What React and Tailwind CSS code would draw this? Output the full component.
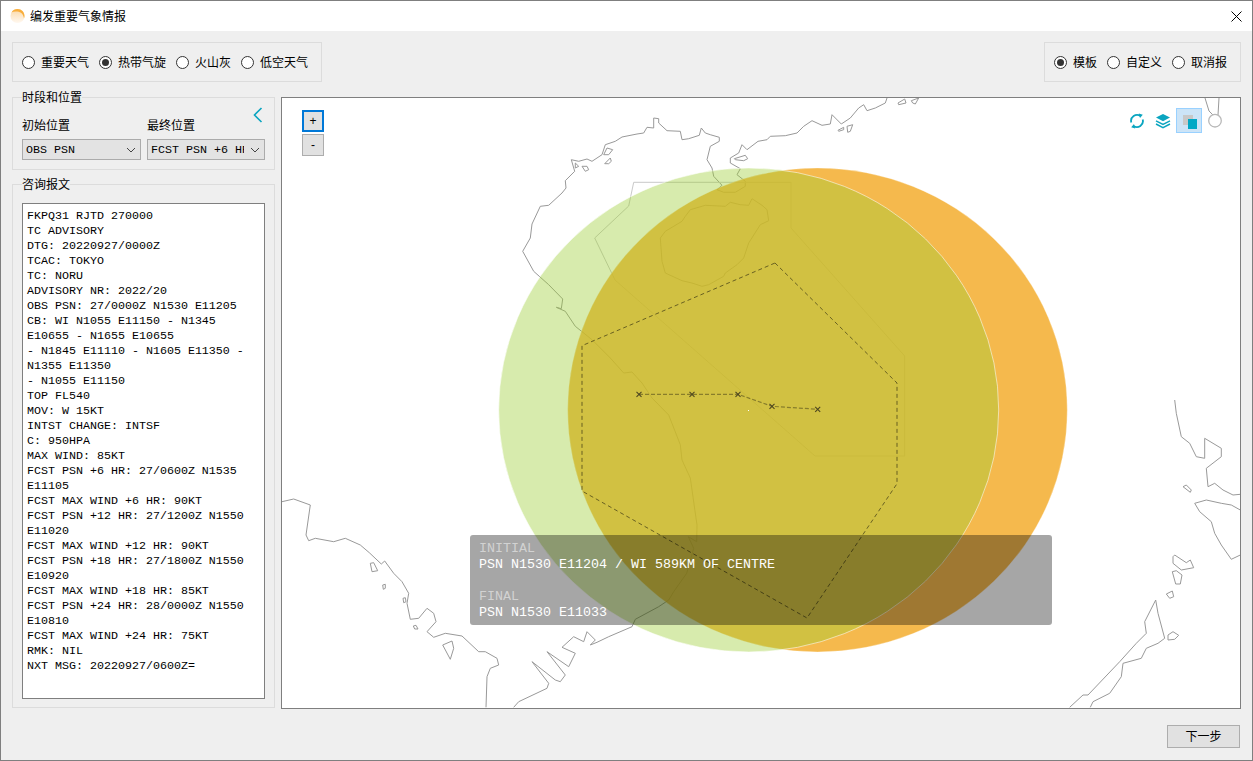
const LEFT_TYPES = [
  { label: '重要天气' },
  { label: '热带气旋', checked: true },
  { label: '火山灰' },
  { label: '低空天气' },
]
const RIGHT_TYPES = [{ label: '模板', checked: true }, { label: '自定义' }, { label: '取消报' }]

const ADVISORY = `FKPQ31 RJTD 270000
TC ADVISORY
DTG: 20220927/0000Z
TCAC: TOKYO
TC: NORU
ADVISORY NR: 2022/20
OBS PSN: 27/0000Z N1530 E11205
CB: WI N1055 E11150 - N1345
E10655 - N1655 E10655
- N1845 E11110 - N1605 E11350 -
N1355 E11350
- N1055 E11150
TOP FL540
MOV: W 15KT
INTST CHANGE: INTSF
C: 950HPA
MAX WIND: 85KT
FCST PSN +6 HR: 27/0600Z N1535
E11105
FCST MAX WIND +6 HR: 90KT
FCST PSN +12 HR: 27/1200Z N1550
E11020
FCST MAX WIND +12 HR: 90KT
FCST PSN +18 HR: 27/1800Z N1550
E10920
FCST MAX WIND +18 HR: 85KT
FCST PSN +24 HR: 28/0000Z N1550
E10810
FCST MAX WIND +24 HR: 75KT
RMK: NIL
NXT MSG: 20220927/0600Z=`

// coordinates below were read off 3x crops, so scale them back to map space
const pts = (ox, oy, list) => {
  const out = []
  for (let i = 0; i < list.length; i += 2) out.push(`${(ox + list[i] / 3).toFixed(1)},${(oy + list[i + 1] / 3).toFixed(1)}`)
  return out.join(' ')
}

const COAST_LINES = [
  // north coast, east part
  pts(400, 0, [615, 0, 610, 15, 580, 30, 555, 38, 545, 20, 530, 30, 505, 60, 478, 78, 450, 50, 445, 78, 420, 82, 390, 68, 365, 85, 345, 105, 310, 113, 265, 115, 255, 125, 228, 130, 195, 155, 180, 140, 170, 165, 145, 180, 145, 195, 175, 212, 165, 230, 190, 250, 190, 265, 160, 283, 125, 283, 105, 275, 120, 262, 95, 235, 90, 210, 75, 185, 85, 145, 112, 130, 112, 118, 85, 110, 70, 105, 58, 90, 52, 112, 20, 122, 0, 125]),
  // north coast, west part, then down the vietnam side
  pts(0, 0, [1200, 125, 1195, 100, 1155, 98, 1130, 75, 1130, 62, 1115, 60, 1115, 90, 1095, 88, 1085, 105, 1065, 108, 1020, 117, 1000, 130, 970, 140, 960, 170, 930, 190, 915, 183, 890, 190, 868, 185, 878, 220, 850, 248, 852, 270, 840, 285, 800, 322, 775, 325, 750, 378, 745, 420, 722, 460, 755, 520, 800, 560, 842, 603, 838, 632, 823, 628, 850, 640, 880, 685, 930, 725, 985, 780, 1025, 825, 1050, 822, 1080, 855, 1110, 900, 1160, 951, 1195, 1040, 1200, 1086, 1225, 1140, 1245, 1281, 1244, 1331, 1219, 1316, 1235, 1351, 1214, 1426, 1175, 1481, 1160, 1506, 1130, 1526, 1060, 1564, 1050, 1586, 980, 1616, 945, 1633, 925, 1641, 940, 1626, 915, 1601, 905, 1631, 875, 1616, 840, 1648, 880, 1666, 860, 1706, 795, 1661, 850, 1731, 835, 1751, 820, 1746, 750, 1691, 800, 1756, 795, 1771, 710, 1811, 695, 1828]),
  // gulf of thailand side
  pts(0, 402, [612, 622, 615, 530, 625, 505, 650, 495, 645, 475, 610, 455, 590, 455, 540, 408, 490, 400, 455, 412, 435, 395, 462, 365, 455, 340, 435, 325, 410, 355, 385, 358, 375, 310, 380, 280, 360, 245, 335, 220, 308, 183, 298, 192, 262, 158, 235, 135, 190, 115, 155, 125, 100, 115, 80, 122, 72, 105, 85, 15, 35, -3, 0, 5]),
  // philippines
  pts(571, 302, [965, 0, 970, 40, 985, 110, 1010, 130, 1030, 170, 1055, 175, 1055, 115, 1105, 145, 1105, 170, 1060, 205, 1065, 260, 1085, 250, 1110, 270, 1140, 285, 1162, 283]),
  pts(571, 302, [1162, 330, 1135, 315, 1105, 310, 1060, 300, 1025, 310, 1040, 335, 1075, 365, 1085, 400, 1105, 435, 1135, 478, 1162, 465]),
  pts(571, 402, [650, 622, 690, 585, 705, 585, 800, 485, 850, 430, 880, 400, 875, 365, 908, 300, 915, 340, 935, 415, 915, 430, 880, 445, 865, 475, 810, 490, 805, 530, 770, 580, 720, 605, 712, 622]),
  // top right corner
  '923,0 927,13 931,17',
  '937,0 936,17',
]

const ISLANDS = [
  pts(0, 0, [880, 195, 890, 205, 880, 210]),
  pts(0, 0, [900, 205, 915, 205, 920, 215, 910, 220]),
  pts(0, 0, [965, 170, 975, 150, 992, 155, 980, 170]),
  pts(0, 0, [968, 197, 985, 180, 988, 190, 980, 197]),
  pts(400, 0, [157, 182, 190, 172, 197, 182, 185, 188, 160, 185]),
  pts(400, 0, [468, 97, 485, 88, 485, 95, 470, 100]),
  pts(400, 0, [495, 85, 512, 80, 505, 100, 497, 103]),
  pts(400, 0, [648, 15, 668, 3, 672, 15, 650, 20]),
  pts(400, 0, [688, 8, 710, 0, 700, 18, 692, 15]),
  // hainan
  pts(400, 0, [10, 355, 25, 335, 70, 322, 130, 325, 145, 313, 175, 320, 200, 322, 210, 302, 240, 322, 255, 335, 260, 368, 235, 380, 200, 435, 185, 480, 165, 500, 130, 525, 125, 535, 80, 560, 60, 565, 30, 555, 0, 548, -50, 525, -60, 490, -65, 420, -50, 400, 0, 370]),
  pts(0, 402, [265, 190, 275, 188, 287, 212, 270, 215]),
  pts(0, 402, [302, 255, 310, 253, 310, 265, 304, 268]),
  pts(0, 402, [363, 295, 370, 293, 372, 305, 365, 308]),
  pts(0, 402, [394, 378, 402, 376, 408, 387, 398, 387]),
  pts(0, 402, [482, 435, 510, 423, 515, 445, 505, 478]),
  pts(571, 302, [990, 260, 1000, 255, 1015, 270, 1012, 277]),
  pts(571, 302, [960, 470, 965, 465, 1000, 488, 1012, 480, 1022, 503, 985, 510, 960, 490]),
  pts(571, 302, [958, 515, 970, 512, 987, 525, 982, 552, 968, 552]),
  pts(571, 302, [940, 582, 958, 573, 962, 590, 950, 595]),
  pts(571, 302, [945, 705, 960, 695, 977, 706, 965, 718, 945, 720]),
]

const CYCLONE_AREA = '493,165 615,285 615,385.7 525,520 300,393 300,247.7'
const TRACK = [
  [357, 296.3],
  [410, 296.3],
  [456, 296.3],
  [490, 308.3],
  [535.7, 311.3],
]

function Radio({ label, checked }) {
  return (
    <label className="flex items-center gap-[6px]">
      <span className="flex h-[13px] w-[13px] items-center justify-center rounded-full border border-[#333333] bg-white">
        {checked && <span className="h-[7px] w-[7px] rounded-full bg-[#333333]" />}
      </span>
      <span className="relative top-[1px] text-[12px] leading-[16px] text-black">{label}</span>
    </label>
  )
}

function Select({ value, width }) {
  return (
    <div className={`flex h-[21px] items-center border border-[#ababab] bg-[#e3e3e3] ${width}`}>
      <span className="min-w-0 flex-1 overflow-hidden pt-[1px] pl-[3px] font-['Liberation_Mono',monospace] text-[11.67px] leading-[19px] whitespace-pre text-black">
        {value}
      </span>
      <svg width="10" height="6" viewBox="0 0 10 6" className="mr-[4px] ml-[6px] shrink-0">
        <path d="M1 1l4 4 4-4" fill="none" stroke="#444" strokeWidth="1" />
      </svg>
    </div>
  )
}

function GroupLegend({ children }) {
  return (
    <span className="absolute top-[-8px] left-[9px] bg-[#efefef] text-[12px] leading-[16px] text-black">{children}</span>
  )
}

function Logo() {
  return (
    <svg width="16" height="16" viewBox="0 0 16 16">
      <defs>
        <linearGradient id="sunFade" x1="0" y1="0" x2="0" y2="1">
          <stop offset="0" stopColor="#fbd9a8" />
          <stop offset="1" stopColor="#fff8f0" />
        </linearGradient>
      </defs>
      <circle cx="8.500" cy="8" r="7" fill="url(#sunFade)" />
      <path d="M2.500 4.500C4 1.800 6 1 8.500 1c4 0 7 3 7 7 0 1-.2 1.800-.5 2.500C14.500 6.500 12 4 8.500 3.600 6 3.300 4 3.500 2.500 4.500z" fill="#f8ae3c" />
    </svg>
  )
}

function RefreshIcon() {
  return (
    <svg width="16" height="16" viewBox="0 0 16 16">
      <g fill="none" stroke="#0aa5c0" strokeWidth="1.800">
        <path d="M2.300 9.500A6 6 0 0 1 11.500 3" />
        <path d="M13.700 6.500A6 6 0 0 1 4.500 13" />
      </g>
      <path d="M9.800 0.500l4 1.200-2.800 3.300zM6.200 15.500l-4-1.200 2.800-3.300z" fill="#0aa5c0" />
    </svg>
  )
}

function LayersIcon() {
  return (
    <svg width="16" height="16" viewBox="0 0 16 16">
      <path d="M8 1l7 3.600-7 3.600-7-3.600z" fill="#0aa5c0" />
      <path d="M1 7.800l7 3.600 7-3.600M1 11l7 3.600 7-3.600" fill="none" stroke="#0aa5c0" strokeWidth="1.500" />
    </svg>
  )
}

function MapView() {
  return (
    <div className="relative min-w-0 flex-1 overflow-hidden border border-[#7f7f7f] bg-white">
      <svg width="958" height="610" viewBox="0 0 958 610" className="absolute top-0 left-0">
        <g fill="none" stroke="#999999" strokeWidth="1" strokeLinejoin="round">
          {COAST_LINES.map((p, i) => (
            <polyline key={i} points={p} />
          ))}
          {ISLANDS.map((p, i) => (
            <polygon key={i} points={p} />
          ))}
          <circle cx="933" cy="22.700" r="6.300" stroke="#b8b8b8" strokeWidth="1.300" />
        </g>
        {/* FIR boundary */}
        <polygon
          points="351.700,84.300 346.700,108 312.700,140 333,182 533,358 622.700,358 622.700,258 509,130 509,84.300"
          fill="none"
          stroke="#c9c9c9"
          strokeWidth="1"
        />
        <ellipse cx="535.500" cy="312" rx="249.800" ry="242" fill="#f2a820" fillOpacity="0.8" stroke="#fff" strokeOpacity="0.3" />
        <ellipse cx="466.700" cy="312" rx="250" ry="242" fill="#9acd32" fillOpacity="0.4" stroke="#fff" strokeOpacity="0.55" />
        <polygon points={CYCLONE_AREA} fill="none" stroke="#000" strokeOpacity="0.5" strokeWidth="1" strokeDasharray="4 3" />
        <polyline
          points={TRACK.map((p) => p.join(',')).join(' ')}
          fill="none"
          stroke="#000"
          strokeOpacity="0.35"
          strokeWidth="1.200"
          strokeDasharray="4 2"
        />
        {TRACK.map(([x, y]) => (
          <path key={x} d={`M${x - 2.500} ${y - 2.500}l5 5m0-5l-5 5`} stroke="#4d4620" strokeWidth="1.100" />
        ))}
        <rect x="466" y="312" width="1" height="1" fill="#fff" />
      </svg>

      {/* zoom buttons */}
      <div className="absolute top-[12px] left-[20px] flex flex-col gap-[2px]">
        <button className="flex h-[22px] w-[22px] items-center justify-center border-2 border-[#0078d7] bg-[#e1e1e1] text-[12px] text-black">
          +
        </button>
        <button className="flex h-[22px] w-[22px] items-center justify-center border border-[#adadad] bg-[#e1e1e1] text-[12px] text-black">
          -
        </button>
      </div>

      {/* map tools */}
      <div className="absolute top-[10px] left-[847px] flex h-[25px] items-center">
        <RefreshIcon />
        <span className="ml-[10px] flex">
          <LayersIcon />
        </span>
        <div className="relative ml-[5px] h-[25px] w-[26px] border border-[#99d1ff] bg-[#cce4f7]">
          <span className="absolute top-[6px] left-[6px] h-[10px] w-[10px] bg-[#c8c8c8]" />
          <span className="absolute top-[10px] left-[11px] h-[10px] w-[9px] bg-[#00a8c6]" />
        </div>
      </div>

      {/* position summary */}
      <div className="absolute top-[437px] left-[188px] h-[90px] w-[582px] rounded-[3px] bg-black/35 pt-[6px] pl-[9px] font-['Liberation_Mono',monospace] text-[13.33px] leading-[16px] whitespace-pre">
        <div className="text-[#d2d2d2]">INITIAL</div>
        <div className="text-white">PSN N1530 E11204 / WI 589KM OF CENTRE</div>
        <div className="h-[16px]" />
        <div className="text-[#d2d2d2]">FINAL</div>
        <div className="text-white">PSN N1530 E11033</div>
      </div>
    </div>
  )
}

export default function App() {
  return (
    <div className="flex h-[761px] w-[1253px] flex-col overflow-hidden border border-[#7f7f7f] bg-[#efefef] font-['Liberation_Sans','Noto_Sans_CJK_SC',sans-serif]">
      {/* title bar */}
      <div className="flex h-[30px] shrink-0 items-center bg-white pr-[10px] pl-[8px]">
        <Logo />
        <span className="relative top-[1px] ml-[5px] flex-1 text-[12px] text-black">编发重要气象情报</span>
        <svg width="11" height="11" viewBox="0 0 11 11">
          <path d="M0.500 0.500l10 10m0-10l-10 10" stroke="#000" strokeWidth="1" />
        </svg>
      </div>

      <div className="flex min-h-0 flex-1 flex-col px-[11px] pt-[11px]">
        <div className="flex h-[40px] shrink-0 justify-between">
          <div className="flex w-[310px] items-center gap-[10px] border border-[#dcdcdc] pl-[9px]">
            {LEFT_TYPES.map((t) => (
              <Radio key={t.label} {...t} />
            ))}
          </div>
          <div className="flex w-[197px] items-center gap-[10px] border border-[#dcdcdc] pl-[9px]">
            {RIGHT_TYPES.map((t) => (
              <Radio key={t.label} {...t} />
            ))}
          </div>
        </div>

        <div className="mt-[15px] flex h-[612px] shrink-0 gap-[6px]">
          <div className="flex w-[263px] shrink-0 flex-col gap-[14px] pb-[1px]">
            <div className="relative h-[73px] shrink-0 border border-[#dcdcdc] px-[9px] pt-[20px]">
              <GroupLegend>时段和位置</GroupLegend>
              <svg width="10" height="16" viewBox="0 0 10 16" className="absolute top-[9px] left-[240px]">
                <path d="M8.500 1L1.500 8l7 7" fill="none" stroke="#0aa5c0" strokeWidth="1.600" />
              </svg>
              <div className="flex gap-[6px]">
                <div>
                  <div className="mb-[5px] text-[12px] leading-[16px] text-black">初始位置</div>
                  <Select value="OBS PSN" width="w-[119px]" />
                </div>
                <div>
                  <div className="mb-[5px] text-[12px] leading-[16px] text-black">最终位置</div>
                  <Select value="FCST PSN +6 HR" width="w-[118px]" />
                </div>
              </div>
            </div>
            <div className="relative min-h-0 flex-1 border border-[#dcdcdc] px-[9px] pt-[18px] pb-[8px]">
              <GroupLegend>咨询报文</GroupLegend>
              <div className="h-full overflow-hidden border border-[#7f7f7f] bg-white pt-[5px] pl-[4px] font-['Liberation_Mono',monospace] text-[11.67px] leading-[15px] whitespace-pre text-black">
                {ADVISORY}
              </div>
            </div>
          </div>
          <MapView />
        </div>

        <div className="mt-[16px] flex justify-end pr-[1px]">
          <button className="h-[23px] w-[73px] border border-[#adadad] bg-[#e1e1e1] text-[12px] text-black">下一步</button>
        </div>
      </div>
    </div>
  )
}
